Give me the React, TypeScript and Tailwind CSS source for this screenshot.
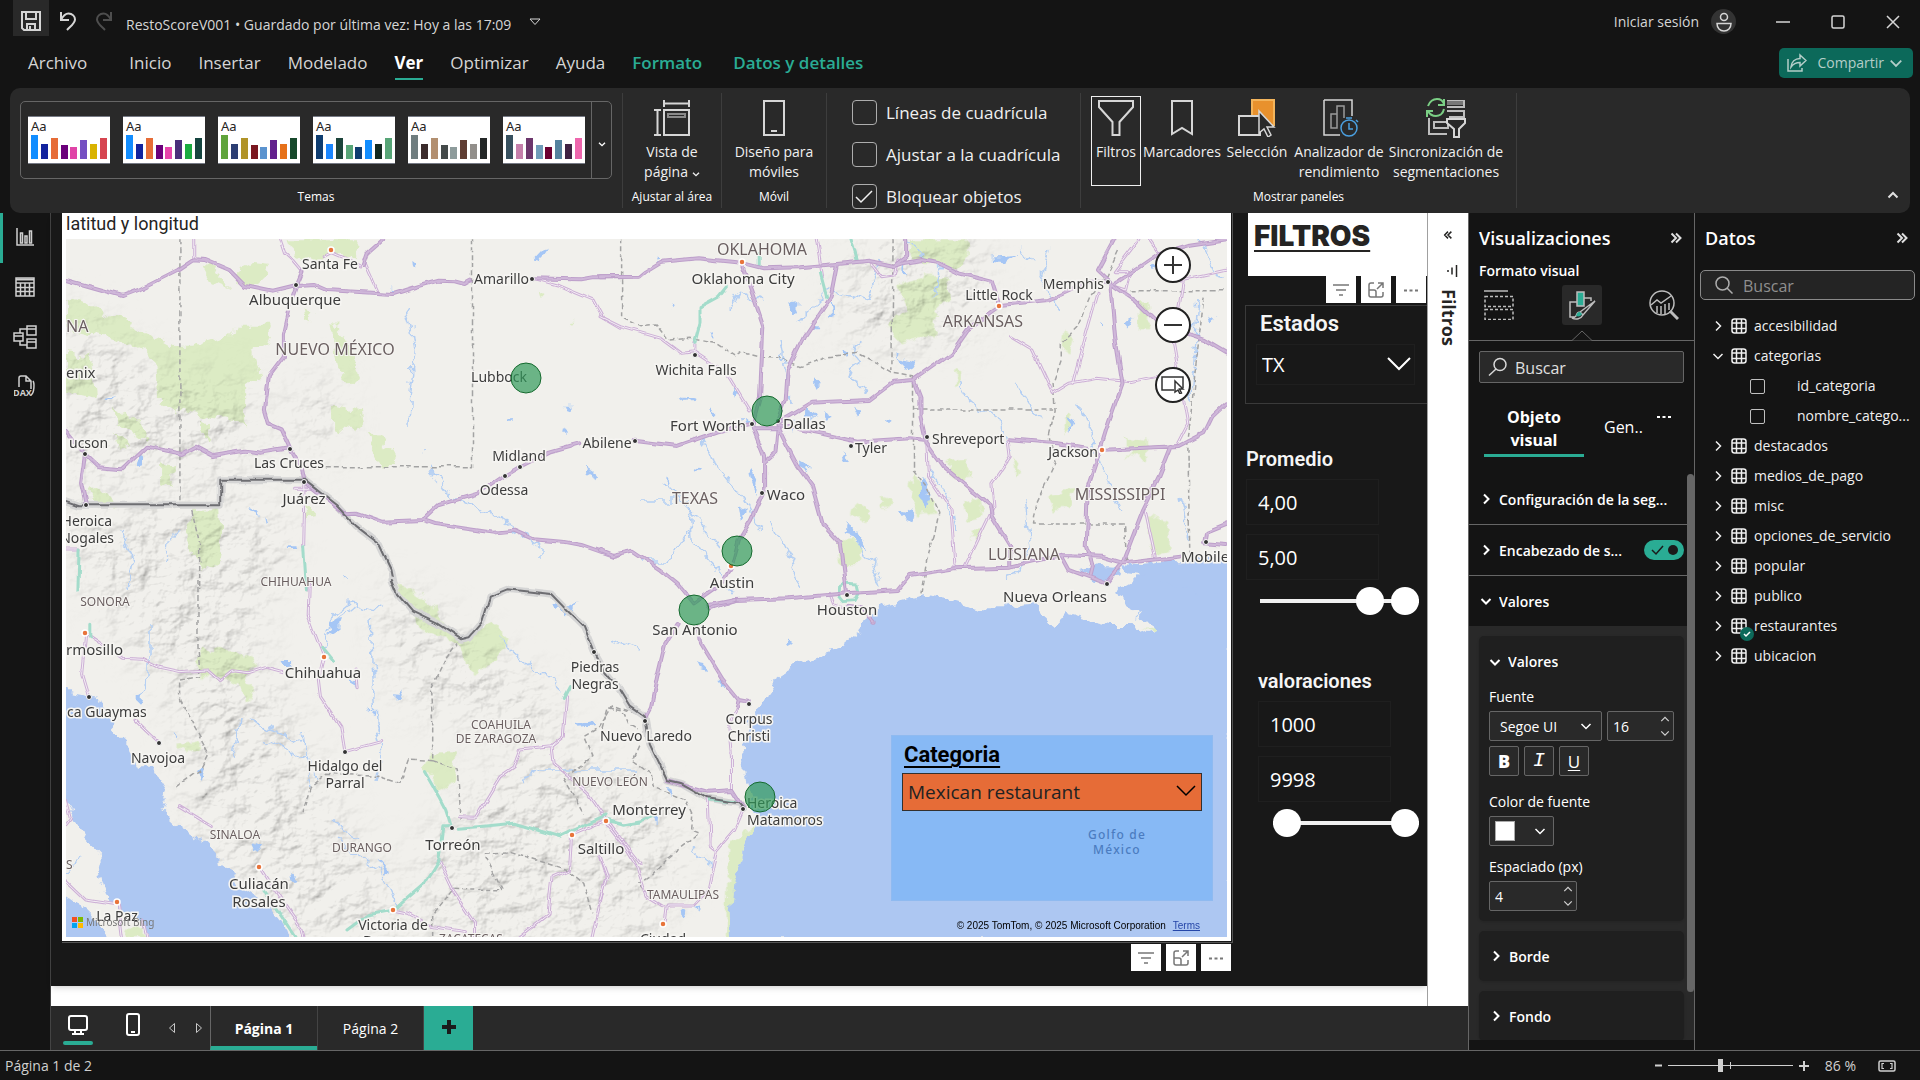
import React, { useState } from "react";

const segoe = "font-['Open_Sans','Noto_Sans',sans-serif]";
const din = "font-[Roboto,sans-serif]";

type IconProps = { w: number; h?: number; children: React.ReactNode; className?: string; sw?: number };

function Ico({ w, h, children, className = "", sw = 1 }: IconProps) {
  const hh = h ?? w;
  return (
    <svg
      width={w}
      height={hh}
      viewBox={`0 0 ${w} ${hh}`}
      fill="none"
      stroke="currentColor"
      strokeWidth={sw}
      className={`shrink-0 ${className}`}
      aria-hidden="true"
    >
      {children}
    </svg>
  );
}

const Chevron = ({ dir, className = "", sw = 2, size = 12 }: { dir: "right" | "down" | "up"; className?: string; sw?: number; size?: number }) => (
  <svg width={size} height={size} viewBox="0 0 12 12" fill="none" stroke="currentColor" strokeWidth={sw} className={`shrink-0 ${className}`} aria-hidden="true">
    {dir === "right" && <path d="M4 1.5 8.5 6 4 10.5" />}
    {dir === "down" && <path d="M1.5 4 6 8.5 10.5 4" />}
    {dir === "up" && <path d="M1.5 8.5 6 4l4.5 4.5" />}
  </svg>
);

const Double = ({ flip = false }: { flip?: boolean }) => (
  <Ico w={12} sw={2} className={flip ? "rotate-180" : ""}>
    <path d="M1.5 1.5 6 6l-4.5 4.5M6 1.5 10.5 6 6 10.5" />
  </Ico>
);

/* ---------- Title bar and tabs ---------- */

function TitleBar() {
  return (
    <header className="flex h-[42px] items-start pl-[13px] text-[#d6d6d6]">
      <button aria-label="Guardar" className="flex h-9 w-9 items-center justify-center bg-[#292929] pt-[6px]">
        <Ico w={20} sw={2}>
          <path d="M1 1h18v18H3l-2-2zM5 1v7h10V1M6 19v-6h8v6M9 15v4" />
        </Ico>
      </button>
      <button aria-label="Deshacer" className="ml-[5px] flex h-[42px] w-7 items-center justify-center">
        <Ico w={18} h={20} sw={2}>
          <path d="M2 1v8h8M2 9c2-4 4-6.500 7.500-6.500 4 0 6.500 3 6.500 6C16 12 13 14 8 19" />
        </Ico>
      </button>
      <button aria-label="Rehacer" className="ml-2 flex h-[42px] w-7 items-center justify-center text-[#4e4e4e]">
        <Ico w={18} h={20} sw={2}>
          <path d="M16 1v8H8M16 9c-2-4-4-6.500-7.500-6.500-4 0-6.500 3-6.500 6C2 12 5 14 10 19" />
        </Ico>
      </button>
      <button className="ml-2 flex h-[49px] items-center gap-[18px] text-sm">
        <span>RestoScoreV001 • Guardado por última vez: Hoy a las 17:09</span>
        <Ico w={12} h={8} className="mb-[6px]">
          <path d="M1 1h10L6 6.500z" />
        </Ico>
      </button>
      <div className="ml-auto flex h-[43px] items-center">
        <button className="flex items-center gap-3 text-sm">
          Iniciar sesión
          <span className="flex h-[25px] w-[25px] items-center justify-center rounded-full bg-[#333]">
            <Ico w={16} h={20} sw={1.5}>
              <circle cx="8" cy="5" r="3.500" />
              <path d="M1 11.500h14c0 4.500-3 7.500-7 7.500s-7-3-7-7.500z" />
            </Ico>
          </span>
        </button>
        <button aria-label="Minimizar" className="ml-[33px] flex w-[28px] justify-center">
          <Ico w={14} sw={1.5}><path d="M0 7h14" /></Ico>
        </button>
        <button aria-label="Maximizar" className="ml-[27px] flex w-[28px] justify-center">
          <Ico w={14} sw={1.5}><rect x="1" y="1" width="12" height="12" rx="1.500" /></Ico>
        </button>
        <button aria-label="Cerrar" className="mr-[13px] ml-[27px] flex w-[28px] justify-center">
          <Ico w={14} sw={1.5}><path d="m1 1 12 12M13 1 1 13" /></Ico>
        </button>
      </div>
    </header>
  );
}

function Tabs() {
  const tabs = ["Inicio", "Insertar", "Modelado", "Ver", "Optimizar", "Ayuda"];
  return (
    <nav className="flex h-[46px] items-start pl-7 text-[17px] leading-[42px] text-[#d6d6d6]">
      <button className="mr-[42px]">Archivo</button>
      <div className="flex gap-[27px]">
        {tabs.map((t) =>
          t === "Ver" ? (
            <button key={t} className="relative font-bold text-white">
              {t}
              <span className="absolute inset-x-0 bottom-0 mb-[4px] h-[2px] bg-[#2aac94]" />
            </button>
          ) : (
            <button key={t}>{t}</button>
          ),
        )}
        <button className="font-semibold text-[#2aac94]">Formato</button>
        <button className="ml-1 font-semibold text-[#2aac94]">Datos y detalles</button>
      </div>
      <button className="mt-[6px] mr-[7px] ml-auto flex h-[30px] items-center rounded-[5px] bg-[#0c695a] pr-[10px] pl-2 text-sm text-[#b4cec9]">
        <Ico w={20} sw={1.5}>
          <path d="M1 6v12h14v-3M13 2l6 5.500-6 5.500v-3.500C9 9.500 6.500 10.500 4 14c.5-5 4-8.500 9-8.500z" />
        </Ico>
        <span className="ml-[10px]">Compartir</span>
        <Chevron dir="down" sw={1.5} size={14} className="ml-[5px]" />
      </button>
    </nav>
  );
}

/* ---------- Ribbon ---------- */

const barHeights = [24, 15, 21, 14, 12, 19, 15, 21];
const themes = [
  ["#118dff", "#12239e", "#e66c37", "#6b007b", "#e044a7", "#744ec2", "#d9b300", "#d64550"],
  ["#118dff", "#12239e", "#e66c37", "#6b007b", "#e645ab", "#4a2f7a", "#1aab40", "#15443f"],
  ["#5fa33b", "#2c3e73", "#b09328", "#7a1720", "#5b93cf", "#62208d", "#e6711a", "#17492c"],
  ["#0f3d70", "#1a86ff", "#1c443b", "#57a577", "#0f3d70", "#118dff", "#12291f", "#57a577"],
  ["#6f7d7f", "#3b2b2b", "#b28f70", "#444a4a", "#8d9b9b", "#5f3d33", "#928f8b", "#242828"],
  ["#37505e", "#c57fab", "#6c366c", "#6f9bb8", "#6b0032", "#55829e", "#3f2142", "#ee66ad"],
];

function Group({ label, className = "", children }: { label?: string; className?: string; children: React.ReactNode }) {
  return (
    <section className={`my-[5px] flex flex-col border-r border-[#3d3d3d] pt-[7px] ${className}`}>
      {children}
      {label && <p className="mt-auto pb-[3px] text-center text-[12px] leading-4 font-medium text-white">{label}</p>}
    </section>
  );
}

function RibbonButton({ icon, lines, className = "" }: { icon: React.ReactNode; lines: React.ReactNode[]; className?: string }) {
  return (
    <button className={`flex flex-col items-center text-[14px] leading-5 whitespace-nowrap text-[#f0f0f0] ${className}`}>
      <span className="mb-[6px] flex h-9 items-center">{icon}</span>
      {lines.map((l, i) => (
        <span key={i} className="flex items-center">{l}</span>
      ))}
    </button>
  );
}

function RibbonCheck({ label, checked = false }: { label: string; checked?: boolean }) {
  const [on, setOn] = useState(checked);
  return (
    <label className="flex h-[25px] items-center gap-[9px] text-[17px] text-[#f0f0f0]">
      <span className="relative h-[25px] w-[25px]">
        <input
          type="checkbox"
          checked={on}
          onChange={() => setOn(!on)}
          className="h-[25px] w-[25px] appearance-none rounded-[4px] border border-[#adadad]"
        />
        {on && (
          <Ico w={25} sw={1.5} className="pointer-events-none absolute inset-0">
            <path d="m4 13 5 5L20 7" />
          </Ico>
        )}
      </span>
      {label}
    </label>
  );
}

function Ribbon() {
  return (
    <div className="relative z-10 mx-[10px] flex h-[125px] shrink-0 rounded-[10px] bg-[#292929]">
      <Group label="Temas" className="w-[613px] pr-[10px] pl-[10px]">
        <div className="mt-px flex h-[78px] rounded-[5px] border border-[#666]">
          <div className="flex flex-1 items-center gap-[13px] pl-[7px]">
            {themes.map((t, i) => (
              <button key={i} aria-label={`Tema ${i + 1}`} className="flex h-12 w-[82px] flex-col border-y border-[#767a85] bg-white px-[3px] text-left">
                <span className="font-['Noto_Sans'] text-[13px] leading-[18px] text-[#252423]">Aa</span>
                <span className="flex h-6 w-full items-end justify-between">
                  {t.map((c, j) => (
                    <span key={j} className="w-[7px]" style={{ background: c, height: barHeights[j] }} />
                  ))}
                </span>
              </button>
            ))}
          </div>
          <button aria-label="Más temas" className="flex w-5 items-center justify-center border-l border-[#666] text-white">
            <Chevron dir="down" size={8} sw={2} className="mt-2" />
          </button>
        </div>
      </Group>
      <Group label="Ajustar al área" className="w-[99px]">
        <RibbonButton
          lines={["Vista de", <>página<Chevron dir="down" size={8} sw={2} className="mt-1 ml-1" /></>]}
          icon={
            <Ico w={36} sw={2} className="text-[#d6d6d6]">
              <path d="M10 0v7M35 0v7M10 3.500h25M0 10h7M0 35h7M3.500 10v25M10 10h25v25H10z" />
              <path d="M14 14h17v3H14z" stroke="#8a8a8a" />
            </Ico>
          }
        />
      </Group>
      <Group label="Móvil" className="w-[105px]">
        <RibbonButton
          lines={["Diseño para", "móviles"]}
          icon={
            <Ico w={22} h={36} sw={2} className="text-[#d6d6d6]">
              <path d="M1 1h20v34H1zM8 31h6" />
            </Ico>
          }
        />
      </Group>
      <Group className="w-[254px] pl-[25px]">
        <div className="flex flex-col gap-[17px]">
          <RibbonCheck label="Líneas de cuadrícula" />
          <RibbonCheck label="Ajustar a la cuadrícula" />
          <RibbonCheck label="Bloquear objetos" checked />
        </div>
      </Group>
      <Group label="Mostrar paneles" className="w-[436px]">
        <div className="-mt-1 flex pl-[10px]">
          <RibbonButton
            className="h-[90px] w-[50px] shrink-0 border border-[#f0f0f0] pt-[3px]"
            lines={["Filtros"]}
            icon={
              <Ico w={36} sw={2} className="text-[#d6d6d6]">
                <path d="M1 1h34v6L21.500 22v13h-7V22L1 7z" />
              </Ico>
            }
          />
          <RibbonButton
            className="w-[82px] shrink-0 pt-1"
            lines={["Marcadores"]}
            icon={
              <Ico w={22} h={36} sw={2} className="text-[#d6d6d6]">
                <path d="M1 1h20v33l-10-6-10 6z" />
              </Ico>
            }
          />
          <RibbonButton
            className="w-[68px] shrink-0 pt-1"
            lines={["Selección"]}
            icon={
              <Ico w={38} h={38} sw={2} className="text-[#d6d6d6]">
                <path d="M14 1h22v25H14z" fill="#e8912d" stroke="#f2b45c" />
                <path d="M1 17h21v19H1z" fill="#292929" />
                <path d="M21 12v22l5-4 4 8 3-2-4-8h7z" fill="#292929" strokeWidth="1.500" />
              </Ico>
            }
          />
          <RibbonButton
            className="w-[96px] shrink-0 pt-1"
            lines={["Analizador de", "rendimiento"]}
            icon={
              <Ico w={36} h={38} sw={1.5} className="ml-1 text-[#d6d6d6]">
                <path d="M1 1h28v16M1 1v35h16" />
                <path d="M8 29V15h6v14zM14 29V7h7v12" stroke="#9a9a9a" />
                <circle cx="26" cy="29" r="8" stroke="#4ba0e0" />
                <path d="M26 24v6h4M23 19h6M33 21l2 2" stroke="#4ba0e0" />
              </Ico>
            }
          />
          <RibbonButton
            className="w-[118px] shrink-0 pt-1"
            lines={["Sincronización de", "segmentaciones"]}
            icon={
              <Ico w={40} h={40} sw={2} className="text-[#d6d6d6]">
                <path d="M21 3h17v6H21M21 13h17v6H23M3 20v16h18M8 24h14v6H8z" stroke="#bdbdbd" />
                <path d="M21 5h16" stroke="#777" strokeWidth="4" />
                <path d="M21 21h18v4l-6 6v8h-5v-8l-7-6z" fill="#292929" />
                <path d="M2 8C4 3 8 1 11 1c3 0 6 2 7 5M18 1v6h-6M18 11c-1 5-5 7-8 7-3 0-6-1-8-5M1 19v-6h6" stroke="#7bcf85" />
              </Ico>
            }
          />
        </div>
      </Group>
      <button aria-label="Contraer la cinta" className="mr-[11px] mb-3 ml-auto self-end text-[#e0e0e0]">
        <Chevron dir="up" size={12} sw={2} />
      </button>
    </div>
  );
}

/* ---------- Map ---------- */

type Sheet = {
  place: string;
  green: string;
  water: string;
  lakes: string;
  major: string;
  minor: string;
  teal: string;
  dashed: string;
  border: string;
};

const sheets: Sheet[] = [
  {
    place: "translate(0 210) scale(.3954 .3333)",
    green:
      "M167 265 230 290 400 385 440 410 490 410 570 380 600 350 680 350 690 390 640 430 655 500 620 530 620 640 520 620 440 600 400 580 395 440 300 390 167 350zM515 165 560 190 580 240 540 220zM605 170 640 150 680 155 670 190 640 225 600 220zM725 88H905L900 150 840 130 775 160 740 140zM835 330 875 380 905 500 895 520 850 470zM845 580 910 600 915 640 900 665 845 650zM930 665 970 690 1000 760 970 770 945 710zM485 895 557 890 560 1000 550 1050 510 1080 470 980 480 930zM290 590 370 660 360 690 300 640zM410 760 440 770 435 830 410 820zM765 290 790 310 780 340 770 330zM770 880 800 915 780 920zM225 830 300 885 240 880zM167 430 230 440 240 560 167 540zM505 630 530 650 520 700zM280 660 330 700 300 710zM1365 245 1380 255 1370 268zM1430 338h18l-8 12z",
    water: "",
    lakes:
      "M1350 140l20-25 15-5-20 35zM1040 150l10 10 0 20-8-8zM345 745l15-12 5 25-10 5zM725 1018h20v8h-18zM1425 590h22l-5 8zM1480 770l25 20-10 15zM270 560l18-4-10 10zM640 890l15 10-5 20zM1285 625h12v10h-12zM1415 660l20 10-10 5zM990 232l8 6-6 4zM1075 712l8 6-6 4zM870 1100l8 6-4 8zM670 920l12 20-8 4z",
    major:
      "M167 210 310 258 350 240 450 180 490 148 520 150 580 180 620 228 690 245 750 228 795 225 825 240 995 252 1060 228 1110 212 1150 214 1175 222 1190 212M1350 205 1470 208 1500 202 1568 202M750 228 735 280 718 370 718 440 680 500 670 600 680 640 710 655 733 715 760 770 768 815M215 733 250 772 310 778 370 710 460 732 495 710 540 738 620 722 660 728 733 715M215 733 205 820 217 885M167 660 215 733M768 815 870 910 900 908 965 935 1070 930 1110 885 1210 850 1276 797 1315 770 1390 725 1465 700M1070 930 1100 942 1250 968 1300 962 1350 988 1420 995 1470 1005 1550 1038 1568 1032M750 228 765 185M920 165 930 130 970 88",
    minor:
      "M1350 205 1410 225 1500 270 1525 325 1568 355M920 150 958 250M490 148V88M768 815 770 900 768 1010M765 185 740 150 722 130 710 88M745 835H790M167 1020H200M820 140l20-12 40 20 30 20",
    teal: "M200 1020 197 1140M768 1010 775 1140",
    dashed: "M455 88V885M1195 88V770H768M485 900 505 1000 505 1140",
    border: "M167 872 200 886H557V809H768L850 885 900 950 960 1005 990 1080 1000 1140",
  },
  {
    place: "translate(600 210) scale(.4082 .3333)",
    green:
      "M755 88H905L900 140 870 170 800 160 760 150zM730 220 850 195 860 260 830 300 820 380 740 400 700 350 750 300zM1135 360l25 10-10 60-20-10zM625 880 660 910 650 930 620 920zM570 990 620 985 650 1020 630 1060 590 1060zM770 800 800 830 820 910 780 920 760 850zM850 760 900 750 910 790 860 800zM895 880 930 860 940 920 900 930zM1290 680 1340 690 1340 750 1290 740zM1110 850 1160 840 1150 900 1100 900zM1320 280h30v80h-30zM1345 910 1390 930 1390 1020 1350 1040zM690 860 720 870 700 905zM800 190l60 10-20 30-50-10zM905 965h20v25h-20zM1010 740l20 30-10 30zM1140 600l15 20-10 50-10-20zM870 480h12v50h-12z",
    water: "M1180 1080 1220 1062 1280 1065 1275 1105 1240 1118 1205 1105zM1285 1060 1330 1062 1420 1048 1545 1045V1200H1340L1350 1130 1300 1120 1320 1095 1290 1090z",
    lakes:
      "M465 290l25-10-12 25zM515 345l20 5-10 10zM500 590l30 20-15 30-15-15zM550 600l20 30-25 10zM590 720l20 30-10 10zM485 760l30 10-20 20zM360 780l25 30-10 40-10-30zM340 890l20 15-15 25zM600 945l40 30 20 40-30-20zM730 900l40 10-5 30-20-10zM790 800l20 50-10 50-15-50zM960 140l60-5-20 20-40-5zM720 440l60 15-10 20-30-10zM1280 340l30-20-20 35zM1490 320l20 10-15 10zM1140 620l20 10-8 30zM1340 150l20 10-20 10zM330 520l15 20-10 20zM345 620l15 15-10 10zM200 560l30 10-10 10zM270 595l10 15-8 10zM620 590l20 15-8 15zM520 500l20 20-12 20zM470 620l10 15-5 25zM140 130l12 12-4 20zM170 280l10 5-5 10zM275 370l12 5-8 8zM600 420l15 10-10 10zM560 270l12 20-8 30zM160 790l10 20-8 15zM230 770l15 5-10 12zM630 955l20 60-12 0zM740 160l10 30-12 0zM690 620l20 10-10 10zM1230 330l10 5-5 10z",
    major:
      "M0 202 95 200 110 185 150 155 240 145 345 158 400 175 490 172 580 162 660 152 720 168 745 158 790 150 830 160 880 190 960 215 978 285M978 285 1100 270 1200 215 1250 215M978 290 900 360 860 430 768 510 720 515 660 570 520 578 470 615 435 640M345 158 370 240 400 350 392 560 375 640M580 165 565 260 500 380 460 480 455 570 435 640M372 640 375 655 435 655 435 640M372 640 290 665 190 708 85 692M435 650 455 700 485 770 520 830 545 940 590 1000 605 1150M375 655 402 740 402 840 370 930 340 990 320 1080 300 1120 230 1180M435 655 430 730 402 760M435 645 540 670 630 695 760 685 800 690M770 512 785 560 785 620 800 700 840 770 955 885 960 920 1005 1010 1005 1070M1005 688 1120 700 1225 720 1420 708 1480 670 1500 620 1535 580M1250 220 1262 380 1280 520 1240 660 1225 720 1195 830 1190 1010 1205 1070 1200 1095M1250 220 1310 270 1360 330 1430 370 1480 390 1535 430M1250 215 1220 180 1260 88M1262 220 1370 130 1440 105 1535 88M605 1150 730 1140 760 1095 870 1075 1005 1070 1130 1035 1230 1040 1285 1060 1420 1040M1130 1035 1150 1080 1240 1120 1280 1060 1330 900 1370 800 1400 708M0 1020 30 1035 80 1022 150 1080 190 1120 230 1180M270 1195 330 1170 460 1165 605 1150M1535 940 1485 965 1480 1000 1535 1005M720 168 750 140V88",
    minor:
      "M0 320 50 350 150 385 200 430 230 425 310 490 365 600M800 690 805 800 860 900 870 1075M895 1070 965 890 960 820 1005 740 1000 690M1005 380 1060 420 1110 550 1150 520 1215 505 1300 515 1360 500M1220 250 1190 380 1160 520M1430 200 1405 400 1440 640 1415 700M530 88 545 200M1335 900 1360 1040M230 430V400M660 152 690 200 720 195 730 150M1262 215 1300 190 1290 240 1250 225M1420 210 1480 195 1535 180M560 1150 570 1180 600 1195M1320 88 1260 185 1290 185M1345 88 1370 130",
    teal: "M310 230 290 260 245 290 245 340 232 400M540 190 555 260M390 130 390 165M615 88 630 150M587 1130 600 1122 630 1125 635 1150 625 1172 595 1175 585 1160z",
    dashed:
      "M53 88V320L100 350 140 345 170 390 220 385 280 400 330 440 350 425 400 440 440 440 490 470 560 440 630 430 680 460 720 490 768 500V780L800 830 830 910 820 970 800 1050 785 1160M718 88 715 480M768 597H1110M1270 120 1240 200 1200 260 1170 350 1130 400 1130 450 1110 520 1115 600 1100 680 1115 760 1070 880 1062 942H1285L1290 1060M1300 242H1535M1480 260 1460 460 1440 700 1445 1040",
    border: "",
  },
  {
    place: "translate(0 580) scale(.4082 .3333)",
    green:
      "M970 10 1000 20 1070 90 1080 130 1130 178 1150 172 1200 120 1235 160 1235 210 1160 285 1130 200 1015 135 1010 95zM485 210 570 210 625 245 600 290 625 310 610 370 570 300 520 290 490 290zM1060 520H1115L1110 600 1075 630 1040 570zM440 495 485 480 500 520 460 515zM310 1050 350 1040 355 1074H305z",
    water:
      "M152 300 185 340 230 350 262 375 270 440 320 500 330 550 395 590 415 630 395 690 440 740 500 790 530 830 560 860 590 930 640 970 680 1010 720 1084 385 1084 340 1030 290 985 260 960 240 880 250 830 210 780 175 700 152 650zM152 940 220 1000 280 1084H152z",
    lakes: "M805 125 835 120 830 150 810 165 815 145zM700 240h18v15h-15zM1365 75 1400 85 1415 60 1405 100 1370 95zM1405 430 1440 420 1452 435 1420 440zM625 790 645 800 635 820zM925 835 950 870 945 885zM330 350l20-5-5 25-15 0zM480 580l25-30-10 50zM860 290l15 10-5 20zM975 330l10 30-8 0zM905 380l10 10-6 10zM430 460l15 8-8 8zM710 880l12 10-8 12z",
    major: "",
    minor:
      "M210 160 200 280 217 350M210 160 300 235 350 238 390 262 440 275 510 270 540 302 570 272 610 278 650 262 690 275M758 0 755 110 793 230 780 300 785 350 835 440 845 515 935 485M333 420 345 435 390 487M440 680 520 740M637 860 700 980 740 1050 745 1074M1485 720 1400 765 1395 870 1355 890 1345 1000 1270 1074M1075 840 1110 930 1165 1030 1165 1074M1125 710 1165 712 1200 640 1225 590 1260 560 1275 510 1350 500 1380 470 1388 350M1350 500 1355 550 1440 640 1485 720 1568 850M1470 835 1485 890 1450 1074M163 905 210 960 290 975 300 1074M962 990 1000 1000 1060 1040 1140 1055M162 660 175 720 162 740M350 1020 360 1074M870 270 875 320",
    teal: "M1485 705 1405 750 1370 770 1260 730 1170 740 1125 745M1105 740 1085 740 1075 840 1040 910 965 990 900 1005 850 1050M1040 575 1075 650 1092 690 1105 740M788 205 815 245M640 920 690 1010 725 1074M1485 720 1530 735 1568 730M220 130v40M1380 355 1395 320",
    dashed:
      "M485 0V200L490 290 440 300 440 360 480 450 510 520 490 570 430 620M740 700 760 620 800 580 930 590 980 610 1000 540 1060 545 1060 430 1055 330 1090 240 1120 190M1060 545 1120 570 1130 720M1190 830 1230 930 1110 925 1060 1000 1060 1074M1190 820 1250 815 1390 870 1430 910 1450 1000M1560 400 1500 375 1470 440 1430 470 1450 530 1380 590 1430 700",
    border: "M960 0 975 45 1010 95 1070 130 1130 178 1150 172 1180 130 1200 50 1245 28 1350 42 1380 80 1430 140 1455 215 1480 270 1520 330",
  },
  {
    place: "translate(600 600) scale(.4082 .3333)",
    green: "M318 720 385 670 355 750 328 850 322 1014 308 1014 312 840zM1330 90 1360 85 1365 105z",
    water:
      "M1545 0V1024H322L318 940 325 850 355 750 385 660 375 620 355 540 345 450 370 360 395 305 430 245 480 195 585 150 635 100 645 70 690 20 730 5 790 -15 850 -5 890 10 940 25 1000 25 1070 15 1080 50 1110 85 1140 40 1200 60 1250 75 1300 75 1340 105 1365 95 1345 60 1290 20 1270 -30 1330 -70z",
    lakes: "M235 190l20 5 5 15-20-8zM160 570l20 5-5 15-15-5zM125 640l18 0-2 40-12-20zM190 925l20 5-10 30-8-10zM290 240l10-10 8 40zM455 105l15 20-8 5zM230 915l20 10-10 10zM270 770l20 20-10 8z",
    major: "M190 75 160 130 140 230 125 320 112 350M240 80 245 130 300 240 340 300 362 305M340 300 335 320M322 570 352 627M165 540 265 575 322 570M270 15 330 0M605 20 640 25 670 65",
    minor:
      "M335 320 315 370 322 470 322 570M352 627 330 690 285 755 265 870 230 915 165 915 160 960M265 595 270 740 285 755M15 670 60 740 90 800 115 890 155 920M0 770 18 830 0 900",
    teal: "M15 665 60 675 100 665 130 650M270 600 330 605",
    dashed: "M95 440 80 480 125 520 130 560 210 600 225 640 222 690 242 700 160 780 120 830 95 850 115 880M0 410 20 320 55 330 70 370 95 390",
    border: "M50 270 75 320 110 350 122 430 165 540 200 550 265 595 340 610 352 627",
  },
];

const rivers =
  "M406 308 413 330 416 352 410 400 409 430M430 470 452 498 470 502 500 520 540 545 540 560M120 530 134 560 128 590M165 560 168 540 178 530M330 620 350 602 380 610M250 720 300 740M560 690 500 640M370 620 375 720 382 750 376 780M640 560 670 560 690 530M660 480 700 520 720 545M770 520 790 560 800 590M850 530 870 560 880 590M960 380 970 400 1000 420 1010 450M1080 400 1085 420 1100 460 1120 510M1050 250 1040 280 1060 310M880 260 870 300 830 290 800 320M760 300 740 290 730 310M780 340 786 370 790 400M930 470 950 500 955 530M1010 580 1030 550 1025 500M1200 300 1195 360 1190 400M1180 500 1190 540M700 440 720 470 745 500 760 530M640 500 680 500M520 780 540 770 640 770M340 840 380 870 400 910M300 730 310 790M360 840 330 820M690 850 715 870M1020 250 1030 262M1200 240 1210 270 1225 275M860 340 850 380 870 390M150 625 150 680 140 700M240 720 235 760M60 880 80 860M355 605 330 625 325 650M260 740 290 750 320 775M690 500 692 540 715 570 735 590M905 240 940 270 930 300M1135 620 1140 580M1015 380 1040 420M640 650 610 640";

type City = [text: string, x: number, y: number, size?: "s" | "m", anchor?: "start" | "end"];

const cities: City[] = [
  ["Santa Fe", 330, 263, "s"], ["Albuquerque", 295, 299], ["Amarillo", 529, 278, "s", "end"], ["enix", 66, 372, undefined, "start"],
  ["ucson", 69, 442, "s", "start"], ["Las Cruces", 289, 462, "s"], ["Juárez", 304, 498], ["Heroica", 112, 520, "s", "end"],
  ["Nogales", 114, 537, "s", "end"], ["rmosillo", 66, 649, undefined, "start"], ["Chihuahua", 323, 672], ["ca Guaymas", 67, 711, "s", "start"],
  ["Navojoa", 158, 757, "s"], ["Hidalgo del", 345, 765, "s"], ["Parral", 345, 782, "s"], ["Monterrey", 649, 809], ["Saltillo", 601, 848],
  ["Torreón", 453, 844], ["Culiacán", 259, 883], ["Rosales", 259, 901], ["La Paz", 117, 915, "s"], ["Victoria de", 393, 924, "s"],
  ["Durango", 392, 940, "s"], ["Ciudad", 663, 938, "s"], ["Piedras", 595, 666, "s"], ["Negras", 595, 683, "s"], ["Nuevo Laredo", 646, 735, "s"],
  ["Corpus", 749, 718, "s"], ["Christi", 749, 735, "s"], ["Heroica", 747, 802, "s", "start"], ["Matamoros", 747, 819, "s", "start"],
  ["San Antonio", 695, 629], ["Austin", 732, 582], ["Waco", 786, 494], ["Odessa", 504, 489, "s"], ["Midland", 519, 455, "s"],
  ["Abilene", 607, 442, "s"], ["Lubbock", 499, 376, "s"], ["Wichita Falls", 696, 369, "s"], ["Fort Worth", 746, 425, undefined, "end"],
  ["Dallas", 783, 423, undefined, "start"], ["Tyler", 855, 447, "s", "start"], ["Shreveport", 932, 438, "s", "start"], ["Jackson", 1098, 451, "s", "end"],
  ["Memphis", 1104, 283, "s", "end"], ["Little Rock", 999, 294, "s"], ["Oklahoma City", 743, 278], ["Mobile", 1181, 556, undefined, "start"],
  ["Nueva Orleans", 1055, 596], ["Houston", 847, 609],
];

const regions: City[] = [
  ["NUEVO MÉXICO", 335, 349, "m"], ["NA", 66, 326, "m", "start"], ["TEXAS", 695, 498, "m"], ["ARKANSAS", 983, 321, "m"],
  ["OKLAHOMA", 762, 249, "m"], ["MISSISSIPPI", 1120, 494, "m"], ["LUISIANA", 1024, 554, "m"], ["CHIHUAHUA", 296, 581],
  ["SONORA", 105, 601], ["COAHUILA", 501, 724], ["DE ZARAGOZA", 496, 738], ["NUEVO LEÓN", 610, 781], ["DURANGO", 362, 847],
  ["SINALOA", 235, 834], ["S", 66, 864, undefined, "start"], ["ZACATECAS", 471, 938], ["TAMAULIPAS", 683, 894],
];

const towns = [
  [296, 285], [304, 482], [290, 449], [85, 454], [86, 505], [520, 467], [505, 476], [532, 279], [752, 424], [778, 421], [851, 446],
  [927, 437], [695, 355], [762, 493], [847, 595], [1107, 584], [1108, 282], [1206, 542], [635, 441], [89, 697], [159, 743], [345, 752],
  [452, 828], [594, 652], [645, 721], [749, 704], [743, 809],
];
const capitals = [
  [742, 262], [999, 306], [1102, 450], [731, 566], [331, 250], [324, 657], [85, 633], [259, 867], [117, 902], [393, 910], [606, 821],
  [572, 835], [663, 924],
];
const bubbles = [[526, 378], [767, 411], [737, 551], [694, 610], [760, 797]];

function MapDrawing() {
  return (
    <svg viewBox="66 239 1161 699" preserveAspectRatio="xMinYMin slice" className="absolute inset-0 h-full w-full font-['Noto_Sans',sans-serif]" role="img" aria-label="Mapa de restaurantes">
      <defs>
        <filter id="relief" x="0" y="0" width="100%" height="100%">
          <feTurbulence type="fractalNoise" baseFrequency="0.035 0.045" numOctaves="5" seed="7" />
          <feDiffuseLighting surfaceScale="7" lightingColor="#ffffff" diffuseConstant="1.300">
            <feDistantLight azimuth="225" elevation="50" />
          </feDiffuseLighting>
        </filter>
        <filter id="rough" filterUnits="userSpaceOnUse" x="46" y="219" width="1201" height="739" colorInterpolationFilters="sRGB">
          <feTurbulence type="fractalNoise" baseFrequency="0.070" numOctaves="3" seed="3" result="n" />
          <feDisplacementMap in="SourceGraphic" in2="n" scale="16" xChannelSelector="R" yChannelSelector="G" />
        </filter>
        <filter id="wobble" filterUnits="userSpaceOnUse" x="56" y="229" width="1181" height="719" colorInterpolationFilters="sRGB">
          <feTurbulence type="fractalNoise" baseFrequency="0.050" numOctaves="2" seed="5" result="n" />
          <feDisplacementMap in="SourceGraphic" in2="n" scale="6" xChannelSelector="R" yChannelSelector="G" />
        </filter>
        <filter id="soft" x="-20%" y="-20%" width="140%" height="140%">
          <feGaussianBlur stdDeviation="22" />
        </filter>
        <mask id="mountains">
          <path d="M66 520 200 500 290 520 250 640 300 740 360 850 420 938 300 938 200 850 180 700 100 600zM560 740 640 780 690 850 650 938 430 938 420 860 480 780zM66 300 160 380 250 380 250 470 66 480zM380 580 560 700 540 740 400 700zM300 380 340 380 330 460 300 460zM860 239H980V340H840z" fill="#fff" filter="url(#soft)" />
        </mask>
      </defs>
      <rect x="66" y="239" width="1161" height="699" fill="#f1f0ec" />
      <g filter="url(#rough)">
        {sheets.map((s) => (
          <path key={s.place} transform={s.place} d={s.green} fill="#dcebc4" />
        ))}
      </g>
      <g mask="url(#mountains)" opacity="0.450" style={{ mixBlendMode: "multiply" }}>
        <rect x="66" y="239" width="1161" height="699" filter="url(#relief)" />
      </g>
      <g filter="url(#rough)">
        <path d={rivers} fill="none" stroke="#b4cff3" strokeWidth="1.500" strokeLinejoin="round" />
        {sheets.map((s) => (
          <g key={s.place} transform={s.place}>
            <path d={s.water} fill="#adc7f2" />
            <path d={s.lakes} fill="#a5c6f5" />
          </g>
        ))}
      </g>
      <g filter="url(#wobble)">
        {sheets.map((s) => (
          <g key={s.place} transform={s.place} fill="none" strokeLinejoin="round" strokeLinecap="round">
            <path d={s.dashed} stroke="#a3a3a3" strokeWidth="1.500" strokeDasharray="5 3" strokeLinecap="butt" vectorEffect="non-scaling-stroke" />
            <path d={s.border} stroke="#d5d5d5" strokeWidth="7" vectorEffect="non-scaling-stroke" />
            <path d={s.minor} stroke="#cdb0d6" strokeWidth="3" vectorEffect="non-scaling-stroke" />
            <path d={s.minor} stroke="#f4eef5" strokeWidth="1" vectorEffect="non-scaling-stroke" />
            <path d={s.teal} stroke="#a3dccb" strokeWidth="3" vectorEffect="non-scaling-stroke" />
            <path d={s.major} stroke="#bd9fca" strokeWidth="4" vectorEffect="non-scaling-stroke" />
            <path d={s.major} stroke="#cfb7d9" strokeWidth="2" vectorEffect="non-scaling-stroke" />
            <path d={s.border} stroke="#6e6e72" strokeWidth="2" vectorEffect="non-scaling-stroke" />
          </g>
        ))}
      </g>
      {towns.map(([x, y]) => (
        <circle key={`${x}-${y}`} cx={x} cy={y} r="2.500" fill="#333" stroke="#fff" strokeWidth="1" />
      ))}
      {capitals.map(([x, y]) => (
        <circle key={`${x}-${y}`} cx={x} cy={y} r="3" fill="#e8743b" stroke="#fff" strokeWidth="1.500" />
      ))}
      {regions.map(([t, x, y, size, anchor]) => (
        <text key={t + x} x={x} y={y} textAnchor={anchor ?? "middle"} dominantBaseline="central" fill="#6a5f60" stroke="#f6f5f2" strokeWidth="2" paintOrder="stroke" className={size === "m" ? "text-[16px]" : "text-[12px]"}>
          {t}
        </text>
      ))}
      {cities.map(([t, x, y, size, anchor]) => (
        <text key={t + x} x={x} y={y} textAnchor={anchor ?? "middle"} dominantBaseline="central" fill="#3d3d3d" stroke="#f6f5f2" strokeWidth="3" paintOrder="stroke" className={size === "s" ? "text-[14px]" : "text-[15px]"}>
          {t}
        </text>
      ))}
      {bubbles.map(([x, y]) => (
        <circle key={x} cx={x} cy={y} r="15" fill="#2f9858" fillOpacity="0.690" stroke="#14692d" />
      ))}
    </svg>
  );
}

function VisualTools() {
  const cls = "flex h-[27px] w-[30px] items-center justify-center bg-white text-[#777]";
  return (
    <div className="flex justify-end gap-[5px]">
      <button aria-label="Filtros del objeto" className={cls}>
        <Ico w={16} h={12} sw={1.5}><path d="M0 1h16M3 6h10M6 11h4" /></Ico>
      </button>
      <button aria-label="Modo de enfoque" className={cls}>
        <Ico w={16} sw={1.5}><path d="M6 1H3a2 2 0 0 0-2 2v10a2 2 0 0 0 2 2h10a2 2 0 0 0 2-2v-3M10 1h5v5M15 1l-6 6M1 8h5a2 2 0 0 1 2 2v5" /></Ico>
      </button>
      <button aria-label="Más opciones" className={cls}>
        <Ico w={14} h={4}><path d="M0 1.500h3v2H0zM5.500 1.500h3v2h-3zM11 1.500h3v2h-3z" fill="currentColor" stroke="none" /></Ico>
      </button>
    </div>
  );
}

function MapVisual() {
  const round = "flex h-9 w-9 items-center justify-center rounded-full border-2 border-[#222] bg-white text-[#333]";
  return (
    <section className="flex min-w-0 flex-1 flex-col pl-[10px]">
      <div className="flex flex-1 flex-col border-r border-b border-[#555] pr-px pb-px">
        <div className="flex flex-1 flex-col bg-white px-1 pt-px pb-1">
          <h2 className={`h-[25px] text-[18px] leading-5 text-[#252423] ${din}`}>latitud y longitud</h2>
          <div className="relative flex-1 overflow-hidden">
            <MapDrawing />
            <div className="absolute top-2 right-9 flex flex-col gap-6">
              <button aria-label="Acercar" className={round}><Ico w={18} sw={2}><path d="M9 0v18M0 9h18" /></Ico></button>
              <button aria-label="Alejar" className={round}><Ico w={18} sw={2}><path d="M0 9h18" /></Ico></button>
              <button aria-label="Seleccionar área" className={round}>
                <Ico w={24} h={18} sw={1.5}><path d="M13 14H1V1h21v11" /><path d="M14 5v11l3-2 2 4 1.500-1-2-4h3.500z" fill="#fff" /></Ico>
              </button>
            </div>
            <div className="absolute right-[14px] bottom-[36px] h-[166px] w-[322px] border border-[#8fbaf0] bg-[#87b9f5] px-[10px] pt-[2px]">
              <label htmlFor="categoria" className={`block pl-[2px] text-[22px] leading-[33px] font-bold text-black underline decoration-2 underline-offset-4 ${din}`}>Categoria</label>
              <div className="relative mt-[2px]">
                <select id="categoria" className="h-[38px] w-full appearance-none border border-[#33302e] bg-[#e66c37] pt-px pl-[5px] text-[19px] text-[#222]">
                  <option>Mexican restaurant</option>
                </select>
                <Ico w={20} h={12} sw={1.5} className="pointer-events-none absolute top-3 right-[6px] text-black"><path d="m1 1 9 9 9-9" /></Ico>
              </div>
              <p className="mt-4 mr-[10px] ml-auto w-[150px] text-center font-['Noto_Sans'] text-[12px] leading-[15px] font-medium tracking-widest text-[#4b7cc0]">Golfo de<br />México</p>
            </div>
            <p className="absolute right-[27px] bottom-[3px] font-['Liberation_Sans',sans-serif] text-[10px] leading-4 text-black">
              © 2025 TomTom, © 2025 Microsoft Corporation
              <a href="#terms" className="ml-[7px] text-[#2546a8] underline">Terms</a>
            </p>
            <p className="absolute bottom-[7px] left-[6px] flex items-center gap-[3px] font-['Noto_Sans'] text-[10px] leading-4 text-[#777]">
              <svg width="11" height="11" aria-hidden="true">
                <path fill="#f25022" d="M0 0h5v5H0z" /><path fill="#7fba00" d="M6 0h5v5H6z" />
                <path fill="#00a4ef" d="M0 6h5v5H0z" /><path fill="#ffb900" d="M6 6h5v5H6z" />
              </svg>
              Microsoft Bing
            </p>
          </div>
        </div>
      </div>
      <div className="h-[43px] pt-px pr-[2px]"><VisualTools /></div>
    </section>
  );
}

const thumb =
  "pointer-events-none absolute inset-0 m-0 h-7 w-full appearance-none bg-transparent [&::-webkit-slider-thumb]:pointer-events-auto [&::-webkit-slider-thumb]:h-7 [&::-webkit-slider-thumb]:w-7 [&::-webkit-slider-thumb]:appearance-none [&::-webkit-slider-thumb]:rounded-full [&::-webkit-slider-thumb]:bg-white";

function RangeSlicer({ title, low, high, lowPos, highPos, className, trackClass }: { title: string; low: string; high: string; lowPos: number; highPos: number; className: string; trackClass: string }) {
  const field = "block h-[46px] w-[133px] border border-[#1f1f1f] bg-transparent pl-[11px] text-[20px] text-white";
  return (
    <section className={className}>
      <h2 className={`text-[20px] leading-6 font-semibold text-[#f5f5f5] ${din}`}>{title}</h2>
      <div className="mt-2 flex flex-col gap-[9px]">
        <input aria-label={`${title} mínimo`} defaultValue={low} className={field} />
        <input aria-label={`${title} máximo`} defaultValue={high} className={field} />
      </div>
      <div className={`relative mt-[7px] mr-2 h-7 ${trackClass}`}>
        <span className="absolute inset-x-0 top-3 h-1 bg-[#f0f0f0]" />
        <input type="range" aria-label={`${title} desde`} defaultValue={lowPos} className={thumb} />
        <input type="range" aria-label={`${title} hasta`} defaultValue={highPos} className={thumb} />
      </div>
    </section>
  );
}

function Slicers() {
  return (
    <aside className="flex w-[182px] shrink-0 flex-col">
      <div className="ml-[3px] h-[63px] bg-white pl-[6px]">
        <h1 className="font-[Inter,sans-serif] text-[28px] leading-[46px] font-black text-[#252423] underline decoration-2 underline-offset-4">FILTROS</h1>
      </div>
      <div className="h-[29px] pr-px"><VisualTools /></div>
      <section className="h-[99px] border border-r-0 border-[#3a3a3a] pl-[10px]">
        <h2 className={`pt-[6px] pl-1 text-[22px] leading-6 font-semibold text-[#f5f5f5] ${din}`}>
          <label htmlFor="estado">Estados</label>
        </h2>
        <div className="relative mt-2 mr-[12px]">
          <select id="estado" className="h-[41px] w-full appearance-none border border-[#1f1f1f] bg-transparent pl-[5px] text-[20px] text-white">
            <option>TX</option>
          </select>
          <Ico w={24} h={14} sw={2} className="pointer-events-none absolute top-[13px] right-1 text-white"><path d="m1 1 11 11L23 1" /></Ico>
        </div>
      </section>
      <RangeSlicer title="Promedio" low="4,00" high="5,00" lowPos={73} highPos={100} className="mt-[43px] pl-px" trackClass="ml-[14px]" />
      <RangeSlicer title="valoraciones" low="1000" high="9998" lowPos={0} highPos={100} className="mt-[54px] pl-[13px]" trackClass="ml-[15px]" />
    </aside>
  );
}

/* ---------- Side panes ---------- */

function LeftRail() {
  const item = "flex h-[50px] items-center justify-center border-l-[3px] pr-[3px] pb-[2px] text-[#d0d0d0]";
  return (
    <nav className="flex w-[50px] shrink-0 flex-col text-[#d0d0d0]">
      <button aria-label="Vista de informe" className={`${item} border-[#2aac94]`}>
        <Ico w={18} sw={1.5}><path d="M1 0v17h17M4.500 15V5h2v10zM9 15V8h2v7zM13.500 15V3h2v12z" /></Ico>
      </button>
      <button aria-label="Vista de tabla" className={`${item} border-transparent`}>
        <Ico w={20} sw={1.5}><path d="M1 1h18v18H1zM1 6h18M1 10.500h18M1 14.500h18M5.500 6v13M10 6v13M14.500 6v13" /><path d="M1 2.500h18" strokeWidth="2" /></Ico>
      </button>
      <button aria-label="Vista de modelo" className={`${item} border-transparent`}>
        <Ico w={24} sw={1.5}><path d="M1 8h9v8H1zM1 11h9M14 1h9v9h-9zM14 4h9M14 14h9v9h-9zM14 17h9M7 8V4h7M7 16v4h7" /></Ico>
      </button>
      <button aria-label="Vista de consultas DAX" className={`${item} border-transparent`}>
        <Ico w={22} h={24} sw={1.5}>
          <path d="M5 12V3a2 2 0 0 1 2-2h5l5 5v8M12 1v5h5M19 6c1.500 2 1.500 12-2 14" />
          <text x="-1" y="21" fill="currentColor" stroke="none" className="text-[9px] font-bold">DAX</text>
        </Ico>
      </button>
    </nav>
  );
}

function FiltersCollapsed() {
  return (
    <aside className="flex w-[41px] shrink-0 flex-col items-center border-l border-[#a0a0a0] bg-white text-[#252423]">
      <button aria-label="Expandir filtros" className="mt-4 scale-75"><Double flip /></button>
      <Ico w={12} h={12} className="mt-[24px] ml-2" sw={1.5}><path d="M10.500 0v12M6 2.500v7M2 5v2" /></Ico>
      <span className="mt-3 ml-[2px] text-[18px] leading-5 font-bold [writing-mode:vertical-rl]">Filtros</span>
    </aside>
  );
}

function Accordion({ label, open = false, children, className = "" }: { label: string; open?: boolean; children?: React.ReactNode; className?: string }) {
  return (
    <div className={`flex items-center ${className}`}>
      <button aria-expanded={open} className="flex min-w-0 items-center gap-[7px] text-[14px] font-semibold text-white">
        <Chevron dir={open ? "down" : "right"} size={12} />
        <span className="truncate">{label}</span>
      </button>
      {children}
    </div>
  );
}

function Spin() {
  return (
    <span className="pointer-events-none absolute inset-y-0 right-1 flex flex-col justify-center gap-1 text-[#d0d0d0]">
      <Chevron dir="up" size={10} sw={1.500} />
      <Chevron dir="down" size={10} sw={1.500} />
    </span>
  );
}

function Visualizations() {
  const box = "h-[30px] rounded-[2px] border border-[#666] bg-[#292929] text-[14px] text-white";
  const lab = "block text-[14px] leading-5 text-white";
  return (
    <aside className="flex w-[227px] shrink-0 flex-col border-x border-[#666]">
      <div className="flex h-[50px] items-center justify-between pr-3 pl-[10px]">
        <h2 className="text-[18px] font-semibold text-white">Visualizaciones</h2>
        <button aria-label="Contraer visualizaciones" className="text-[#e0e0e0]"><Double /></button>
      </div>
      <h3 className="pl-[10px] text-[14px] leading-4 font-semibold text-white">Formato visual</h3>
      <div className="relative flex h-[62px] shrink-0 items-start justify-between border-b border-[#666] pt-[6px] pr-[10px] pl-[10px]">
        <button aria-label="Generar objeto visual" className="flex h-10 w-10 items-center justify-center text-[#bdbdbd]">
          <Ico w={30}><path d="M0 1h24" strokeWidth="1.500" /><path d="M1 6.500h28v10H1zM1 19.500h28v10H1z" strokeWidth="1.500" strokeDasharray="3 2" /></Ico>
        </button>
        <button aria-label="Formato del objeto visual" className="flex h-10 w-10 items-center justify-center rounded-[3px] bg-[#292929] text-[#bdbdbd]">
          <Ico w={28} h={30} sw={1.5}>
            <path d="M9 2h7v14H9z" fill="#2aac94" />
            <path d="M9 12H2v15h4M16 8h7v3" />
            <path d="M27 11 15 25l-3-3zM12 22c-3 0-3 2-4 4-1 1-2 2-4 2 4 2 9 1 11-3z" fill="#292929" />
            <path d="M12 22c-3 0-3 2-4 4 3 1 5 0 6-2z" fill="#2aac94" stroke="none" />
          </Ico>
        </button>
        <button aria-label="Análisis" className="flex h-10 w-10 items-center justify-center text-[#bdbdbd]">
          <Ico w={30} sw={1.5}><circle cx="13" cy="13" r="12" /><path d="m2 15 6-5 4 3L22 6M8 23v-7M12 24v-8M16 24V14M20 20v-7" /><path d="m21 21 8 8" strokeWidth="3" /></Ico>
        </button>
        <Ico w={20} h={11} className="absolute -bottom-px left-1/2 -translate-x-1/2 text-[#666]">
          <path d="M0 10.500 10 1l10 9.500" fill="#141414" />
        </Ico>
      </div>
      <div className="relative mx-[10px] mt-[10px]">
        <Ico w={20} sw={1.500} className="pointer-events-none absolute top-[6px] left-[9px] text-[#d8d8d8]"><circle cx="12" cy="7.500" r="6" /><path d="M8 12 1 18.500" /></Ico>
        <input aria-label="Buscar formato" placeholder="Buscar" className="h-8 w-full rounded-[2px] border border-[#666] bg-[#292929] pt-px pl-[35px] text-[16px] placeholder:text-[#e0e0e0]" />
      </div>
      <div className="flex h-[91px] shrink-0 items-start pt-[21px] pl-[15px] text-white">
        <button className="h-[53px] w-[100px] border-b-[3px] border-[#2aac94] text-[16px] leading-[23px] font-bold">Objeto<br />visual</button>
        <button className="mt-[12px] ml-5 text-[16px] leading-[23px]">Gen..</button>
        <button aria-label="Más pestañas" className="mt-3 ml-[14px]">
          <Ico w={14} h={3}><path d="M0 0h3v2H0zM5.500 0h3v2h-3zM11 0h3v2h-3z" fill="currentColor" stroke="none" /></Ico>
        </button>
      </div>
      <div className="relative min-h-0 flex-1 overflow-hidden">
        <Accordion label="Configuración de la seg..." className="h-[51px] border-b border-[#666] pr-4 pl-[11px]" />
        <Accordion label="Encabezado de s..." className="h-[51px] border-b border-[#666] pr-[10px] pl-[11px]">
          <label className="relative ml-auto h-5 w-10">
            <input type="checkbox" role="switch" defaultChecked aria-label="Encabezado de segmentación" className="block h-5 w-10 appearance-none rounded-full bg-[#2aac94]" />
            <Ico w={40} h={20} sw={1.5} className="pointer-events-none absolute inset-0 text-[#1b1b1b]"><path d="m8 10 4 4 7-8" /><circle cx="29" cy="10" r="5" fill="currentColor" stroke="none" /></Ico>
          </label>
        </Accordion>
        <Accordion label="Valores" open className="h-[50px] pl-[11px]" />
        <div className="flex flex-col gap-[10px] bg-[#292929] pt-[10px] pr-[10px] pl-[10px]">
          <div className="h-[285px] rounded-[5px] bg-[#1f1f1f] px-[10px] shadow">
            <Accordion label="Valores" open className="h-[51px]" />
            <label htmlFor="fuente" className={`${lab} mb-1`}>Fuente</label>
            <div className="flex gap-[5px]">
              <div className="relative">
                <select id="fuente" className={`${box} w-[113px] appearance-none pl-[10px]`}><option>Segoe UI</option></select>
                <Chevron dir="down" sw={1.500} className="pointer-events-none absolute top-[9px] right-[10px] text-white" />
              </div>
              <div className="relative">
                <input aria-label="Tamaño de fuente" defaultValue="16" className={`${box} w-[67px] pl-[5px]`} />
                <Spin />
              </div>
            </div>
            <div className="mt-[5px] flex gap-[5px]">
              <button aria-label="Negrita" className={`${box} w-[30px] text-[18px]! leading-none font-extrabold`}>B</button>
              <button aria-label="Cursiva" className={`${box} w-[30px] font-['Liberation_Mono',monospace] text-[20px]! leading-none italic`}>I</button>
              <button aria-label="Subrayado" className={`${box} w-[30px] text-[17px]! leading-none underline underline-offset-2`}>U</button>
            </div>
            <p className={`${lab} mt-4 mb-1`}>Color de fuente</p>
            <button aria-label="Color de fuente: blanco" className={`${box} flex w-[65px] items-center justify-between pr-[7px] pl-[5px]`}>
              <span className="h-5 w-5 border border-[#aaa] bg-white" />
              <Chevron dir="down" sw={1.500} className="text-white" />
            </button>
            <label htmlFor="espaciado" className={`${lab} mt-[11px] mb-1`}>Espaciado (px)</label>
            <div className="relative w-[88px]">
              <input id="espaciado" defaultValue="4" className={`${box} w-full pl-[5px]`} />
              <Spin />
            </div>
          </div>
          <Accordion label="Borde" className="h-[50px] shrink-0 rounded-[5px] bg-[#1f1f1f] px-[11px] shadow" />
          <Accordion label="Fondo" className="h-[50px] shrink-0 rounded-[5px] bg-[#1f1f1f] px-[11px] shadow" />
        </div>
        <span className="absolute top-0 right-0 h-[518px] w-[7px] rounded-full bg-[#666]" />
      </div>
      <div className="h-[10px] shrink-0" />
    </aside>
  );
}

const TableIcon = () => (
  <Ico w={16} sw={1.5}><rect x="1" y="1" width="14" height="14" rx="2.500" /><path d="M1 5h14M1 10.500h14M5.500 1v14M10.500 1v14" /></Ico>
);

const tables = ["accesibilidad", "categorias", "destacados", "medios_de_pago", "misc", "opciones_de_servicio", "popular", "publico", "restaurantes", "ubicacion"];
const fields = [
  ["id_categoria", "id_categoria"],
  ["nombre_categoria", "nombre_catego..."],
];

function DataPane() {
  return (
    <aside className="flex w-[225px] shrink-0 flex-col">
      <div className="flex h-[50px] items-center justify-between pr-3 pl-[10px]">
        <h2 className="text-[18px] font-semibold text-white">Datos</h2>
        <button aria-label="Contraer datos" className="text-[#e0e0e0]"><Double /></button>
      </div>
      <div className="relative mx-[5px] mt-[7px]">
        <Ico w={18} className="pointer-events-none absolute top-[6px] left-[15px] text-[#adadad]" sw={1.5}><circle cx="7.500" cy="7.500" r="6.500" /><path d="m12 12 5.500 5.500" /></Ico>
        <input aria-label="Buscar datos" placeholder="Buscar" className="h-[30px] w-full rounded-[5px] border border-[#8a8a8a] bg-[#242424] pt-px pl-[42px] text-[16px] placeholder:text-[#8f8f8f]" />
      </div>
      <ul className="mt-[11px] text-[14px] leading-[30px] text-[#f0f0f0]">
        {tables.map((t) => (
          <li key={t}>
            <button aria-expanded={t === "categorias"} className="flex h-[30px] w-full items-center pl-[17px]">
              <Chevron dir={t === "categorias" ? "down" : "right"} sw={1.5} size={12} />
              <span className="relative mr-[7px] ml-[7px]">
                <TableIcon />
                {t === "restaurantes" && (
                  <span className="absolute -right-[7px] -bottom-[7px] flex h-[14px] w-[14px] items-center justify-center rounded-full bg-[#0c695a] text-white">
                    <Ico w={8} sw={1.5}><path d="m1 4 2 2 4-4" /></Ico>
                  </span>
                )}
              </span>
              {t}
            </button>
            {t === "categorias" &&
              fields.map(([id, label]) => (
                <label key={id} className="flex h-[30px] items-center pl-[55px] whitespace-nowrap">
                  <input type="checkbox" className="mr-8 h-[15px] w-[15px] shrink-0 appearance-none rounded-[2px] border border-[#c0c0c0]" />
                  {label}
                </label>
              ))}
          </li>
        ))}
      </ul>
    </aside>
  );
}

/* ---------- Bottom ---------- */

function PageTabs() {
  return (
    <nav className="flex h-11 shrink-0 bg-[#292929] text-[14px] text-white">
      <button aria-label="Diseño de escritorio" className="ml-3 flex w-[30px] flex-col items-center pt-[9px]">
        <Ico w={20} sw={2}><rect x="1" y="1" width="18" height="14" rx="2" /><path d="M7 15v3M13 15v3M4 19h12" /></Ico>
        <span className="mt-[6px] h-1 w-[30px] rounded-full bg-[#2aac94]" />
      </button>
      <button aria-label="Diseño móvil" className="ml-[33px] flex items-start pt-[7px]">
        <Ico w={14} h={23} sw={2}><rect x="1" y="1" width="12" height="21" rx="2" /><path d="M5 19h4" /></Ico>
      </button>
      <button aria-label="Página anterior" className="ml-7 text-[#c8c8c8]"><Ico w={8} h={12}><path d="M6.500 1.500v9L1.500 6z" /></Ico></button>
      <button aria-label="Página siguiente" className="mr-[7px] ml-[19px] text-[#c8c8c8]"><Ico w={8} h={12}><path d="M1.500 1.500v9l5-4.500z" /></Ico></button>
      <button className="w-[107px] border-b-4 border-l border-b-[#2aac94] border-l-[#666] pt-1 font-bold">Página 1</button>
      <button className="w-[107px] border-x border-[#444]">Página 2</button>
      <button aria-label="Nueva página" className="flex w-[49px] items-center justify-center bg-[#2aac94] pb-[2px] text-[#1b1b1b]">
        <Ico w={14} sw={4}><path d="M7 0v14M0 7h14" /></Ico>
      </button>
    </nav>
  );
}

function StatusBar() {
  return (
    <footer className="flex h-[30px] shrink-0 items-center border-t border-[#666] pr-[24px] pl-[5px] text-[14px] text-[#d0d0d0]">
      <span>Página 1 de 2</span>
      <div className="ml-auto flex items-center">
        <button aria-label="Alejar página" className="mr-[6px]"><Ico w={7} sw={2}><path d="M0 3.500h7" /></Ico></button>
        <span className="relative flex w-[125px] items-center">
          <input
            type="range"
            aria-label="Zoom"
            defaultValue={42}
            className="h-px w-full appearance-none bg-[#d0d0d0] [&::-webkit-slider-thumb]:h-[13px] [&::-webkit-slider-thumb]:w-[5px] [&::-webkit-slider-thumb]:appearance-none [&::-webkit-slider-thumb]:bg-[#d0d0d0]"
          />
          <span className="absolute left-1/2 h-[7px] w-px bg-[#d0d0d0]" />
        </span>
        <button aria-label="Acercar página" className="ml-[6px]"><Ico w={10} sw={2}><path d="M5 0v10M0 5h10" /></Ico></button>
        <span className="ml-4">86 %</span>
        <button aria-label="Ajustar a la página" className="ml-[22px]">
          <Ico w={18} h={12} sw={1.5}><rect x="1" y="1" width="16" height="10" rx="1.500" /><path d="M6 3.500H4v5h2M12 3.500h2v5h-2" strokeWidth="1.200" /></Ico>
        </button>
      </div>
    </footer>
  );
}

export default function App() {
  return (
    <div className={`flex h-screen flex-col overflow-hidden bg-[#141414] ${segoe}`}>
      <TitleBar />
      <Tabs />
      <Ribbon />
      <div className="flex min-h-0 flex-1">
        <LeftRail />
        <div className="flex min-w-0 flex-1 flex-col border-l border-[#444]">
          <div className="flex min-h-0 flex-1">
            <div className="flex min-w-0 flex-1 flex-col bg-white pb-5">
              <main className="flex min-h-0 flex-1 gap-3 bg-[#181818] pl-px shadow-md">
                <MapVisual />
                <Slicers />
              </main>
            </div>
            <FiltersCollapsed />
          </div>
          <PageTabs />
        </div>
        <Visualizations />
        <DataPane />
      </div>
      <StatusBar />
    </div>
  );
}
